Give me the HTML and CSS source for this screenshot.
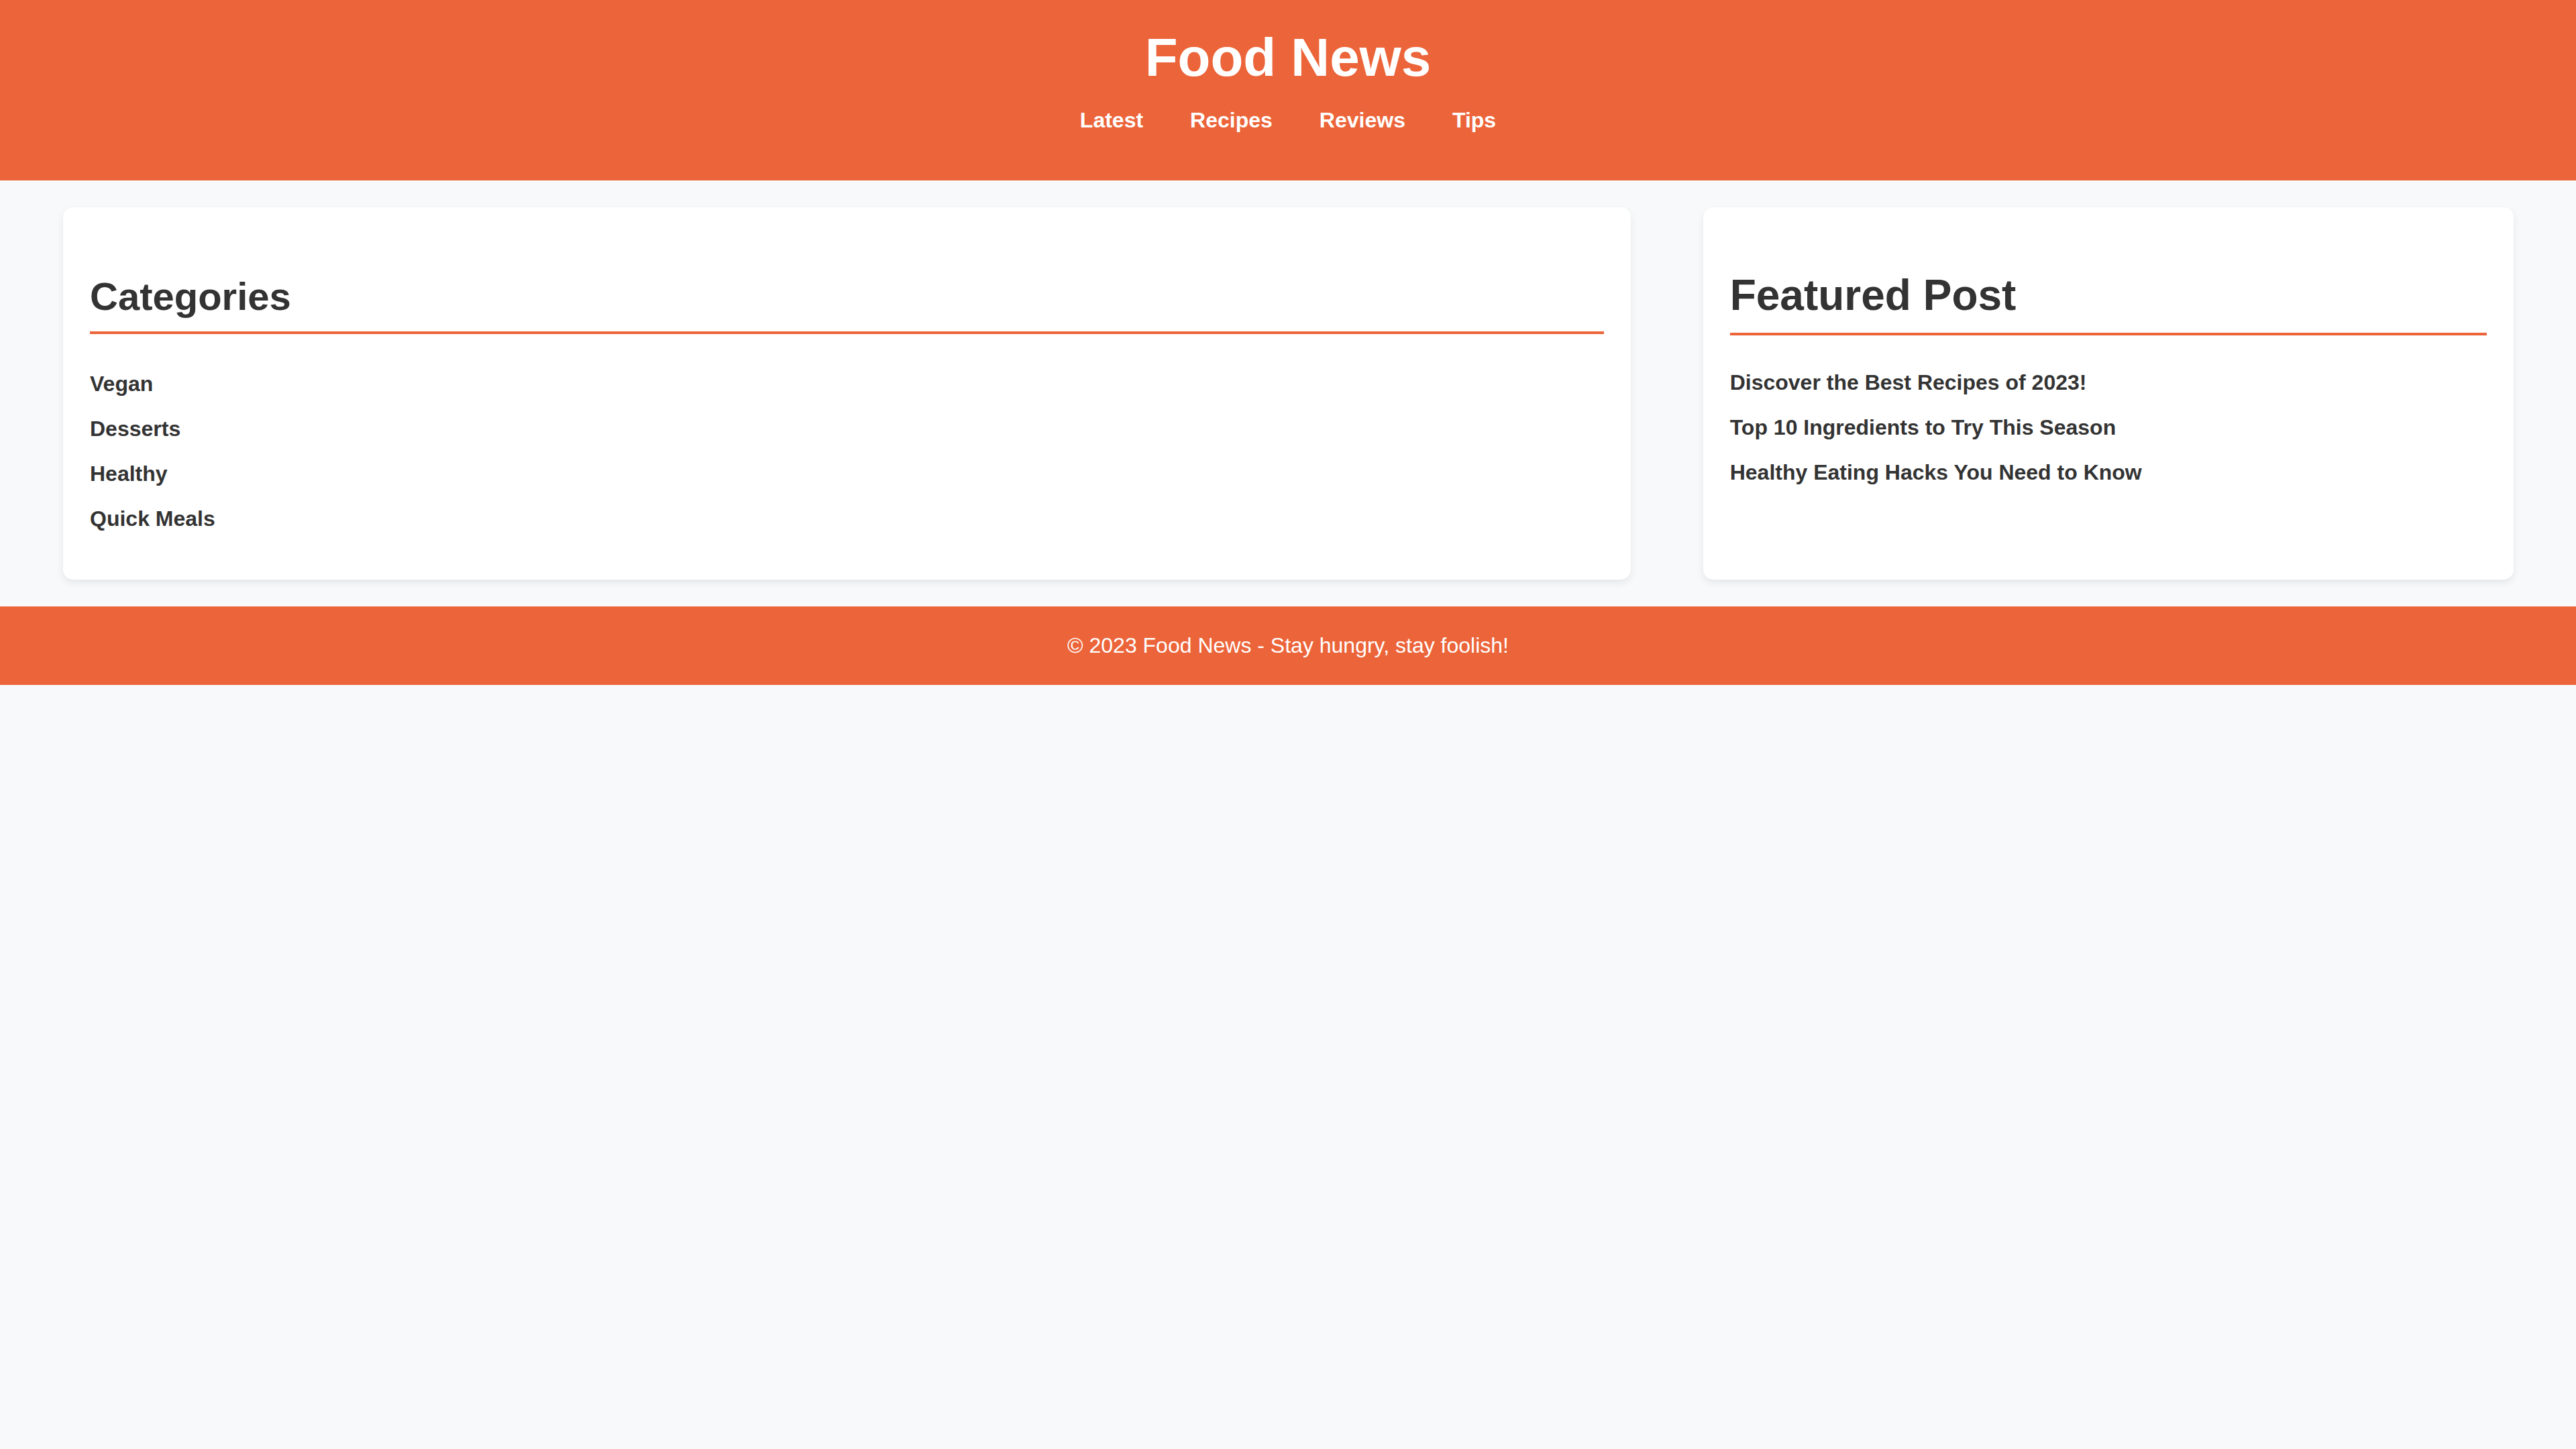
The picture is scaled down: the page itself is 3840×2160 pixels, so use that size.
FILE: index.html
```html
<!DOCTYPE html>
<html lang="en">
<head>
<meta charset="utf-8">
<title>Food News</title>
<link rel="stylesheet" href="styles.css">
</head>
<body>
<header class="site-header">
  <h1 class="site-title">Food News</h1>
  <nav>
    <ul class="nav-list">
      <li><a href="#">Latest</a></li>
      <li><a href="#">Recipes</a></li>
      <li><a href="#">Reviews</a></li>
      <li><a href="#">Tips</a></li>
    </ul>
  </nav>
</header>
<main class="content">
  <section class="card card-main">
    <h2 class="card-title">Categories</h2>
    <ul class="link-list">
      <li><a href="#">Vegan</a></li>
      <li><a href="#">Desserts</a></li>
      <li><a href="#">Healthy</a></li>
      <li><a href="#">Quick Meals</a></li>
    </ul>
  </section>
  <aside class="card card-side">
    <h2 class="card-title card-title-lg">Featured Post</h2>
    <ul class="link-list">
      <li><a href="#">Discover the Best Recipes of 2023!</a></li>
      <li><a href="#">Top 10 Ingredients to Try This Season</a></li>
      <li><a href="#">Healthy Eating Hacks You Need to Know</a></li>
    </ul>
  </aside>
</main>
<footer class="site-footer">
  <p>&copy; 2023 Food News - Stay hungry, stay foolish!</p>
</footer>
</body>
</html>
```
FILE: styles.css
```css
* {
  box-sizing: border-box;
}

html, body {
  margin: 0;
  padding: 0;
}

body {
  background: #f8f9fa;
  color: #333333;
  font-family: "Liberation Sans", Arial, Helvetica, sans-serif;
  font-size: 32px;
}

a {
  text-decoration: none;
  color: inherit;
}

.site-header {
  background: #ec6439;
  color: #ffffff;
  text-align: center;
  padding: 40px 0;
}

.site-title {
  margin: 0;
  font-size: 80px;
  font-weight: 700;
  line-height: normal;
}

.nav-list {
  list-style: none;
  margin: 29px 0 31px;
  padding: 0;
  display: flex;
  justify-content: center;
  gap: 70px;
}

.nav-list a {
  color: #ffffff;
  font-weight: 700;
  font-size: 32px;
}

.content {
  display: flex;
  align-items: stretch;
  gap: 108px;
  padding: 40px 93px 40px 94px;
}

.card {
  background: #ffffff;
  border-radius: 15px;
  box-shadow: 0 5px 12px rgba(0, 0, 0, 0.08);
  padding: 40px;
}

.card-main {
  flex: 2;
}

.card-side {
  flex: 1;
}

.card-title {
  font-size: 58px;
  font-weight: 700;
  line-height: normal;
  color: #333333;
  margin: 59px 0 56px;
  padding-bottom: 19px;
  border-bottom: 4px solid #ec6439;
}

.card-title-lg {
  font-size: 64px;
  margin: 54px 0 52px;
}

.link-list {
  list-style: none;
  margin: 0 0 32px;
  padding: 0;
}

.link-list li {
  margin-bottom: 30px;
  line-height: normal;
}

.link-list a {
  font-weight: 700;
  font-size: 32px;
  color: #333333;
}

.site-footer {
  background: #ec6439;
  color: #ffffff;
  text-align: center;
  padding: 40px 0;
}

.site-footer p {
  margin: 0;
  font-size: 32px;
  line-height: normal;
}
```
